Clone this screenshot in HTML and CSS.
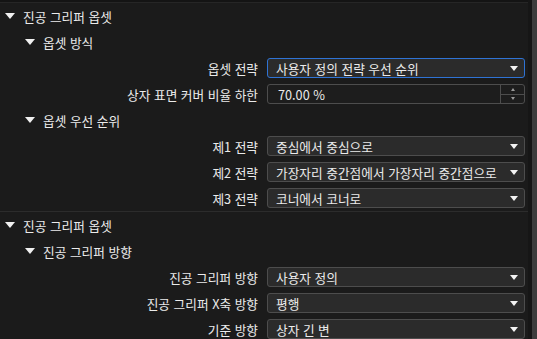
FILE: index.html
```html
<!DOCTYPE html>
<html lang="ko">

<head>
  <meta charset="UTF-8">
  <meta name="viewport" content="width=device-width, initial-scale=1.0">
  <title>진공 그리퍼 옵셋</title>
  <link rel="stylesheet" href="styles.css">
</head>

<body>
  <div class="window">
    <div class="panel">

      <!-- 첫 번째 그룹 -->
      <div class="group">
        <div class="head lvl1"><span class="tri"></span>진공 그리퍼 옵셋</div>
        <div class="head lvl2"><span class="tri"></span>옵셋 방식</div>
        <div class="row">
          <div class="label">옵셋 전략</div>
          <div class="combo focus"><span>사용자 정의 전략 우선 순위</span><span class="arrow"></span></div>
        </div>
        <div class="row">
          <div class="label">상자 표면 커버 비율 하한</div>
          <div class="spin">
            <span class="val">70.00 %</span>
            <span class="btns"><span class="up"></span><span class="down"></span></span>
          </div>
        </div>
        <div class="head lvl2"><span class="tri"></span>옵셋 우선 순위</div>
        <div class="row">
          <div class="label">제1 전략</div>
          <div class="combo"><span>중심에서 중심으로</span><span class="arrow"></span></div>
        </div>
        <div class="row">
          <div class="label">제2 전략</div>
          <div class="combo"><span>가장자리 중간점에서 가장자리 중간점으로</span><span class="arrow"></span></div>
        </div>
        <div class="row">
          <div class="label">제3 전략</div>
          <div class="combo"><span>코너에서 코너로</span><span class="arrow"></span></div>
        </div>
      </div>

      <!-- 두 번째 그룹 -->
      <div class="group">
        <div class="head lvl1"><span class="tri"></span>진공 그리퍼 옵셋</div>
        <div class="head lvl2"><span class="tri"></span>진공 그리퍼 방향</div>
        <div class="row">
          <div class="label">진공 그리퍼 방향</div>
          <div class="combo"><span>사용자 정의</span><span class="arrow"></span></div>
        </div>
        <div class="row">
          <div class="label">진공 그리퍼 X축 방향</div>
          <div class="combo"><span>평행</span><span class="arrow"></span></div>
        </div>
        <div class="row">
          <div class="label">기준 방향</div>
          <div class="combo"><span>상자 긴 변</span><span class="arrow"></span></div>
        </div>
      </div>

    </div>
    <div class="scrollbar"><div class="thumb"></div></div>
  </div>
</body>

</html>
```

FILE: styles.css
```css
body {
  margin: 0;
  background: #1b1b1b;
  font-family: "Noto Sans CJK KR", "Noto Sans", sans-serif;
  font-size: 12.7px;
  color: #ebebeb;
  overflow: hidden;
}

.window {
  display: flex;
  height: 339px;
}

.panel {
  width: 528px;
  border-top: 2px solid #141414;
}

.group {
  border-bottom: 1px solid #2c2c2c;
}

.group:first-child {
  border-top: 1px solid #262626;
}

.head {
  display: flex;
  align-items: center;
  height: 26px;
}

.lvl1 {
  padding-left: 5px;
}

.lvl2 {
  padding-left: 25px;
}

/* Expanded tree arrow */
.tri {
  width: 0;
  height: 0;
  border-left: 5.5px solid transparent;
  border-right: 5.5px solid transparent;
  border-top: 6px solid #f0f0f0;
  margin-right: 8px;
}

.row {
  display: flex;
  align-items: center;
  height: 26px;
}

.label {
  width: 267px;
  padding-right: 9px;
  box-sizing: border-box;
  text-align: right;
  white-space: nowrap;
}

.combo {
  display: flex;
  align-items: center;
  justify-content: space-between;
  width: 258px;
  height: 20px;
  box-sizing: border-box;
  padding: 0 6px 0 8px;
  background: #2b2b2b;
  border: 1px solid #4d4d4d;
  border-radius: 3px;
  white-space: nowrap;
}

.combo.focus {
  border-color: #2f73d4;
}

.arrow {
  width: 0;
  height: 0;
  border-left: 4.5px solid transparent;
  border-right: 4.5px solid transparent;
  border-top: 5px solid #f2f2f2;
}

.spin {
  display: flex;
  width: 258px;
  height: 20px;
  box-sizing: border-box;
  background: #1d1d1d;
  border: 1px solid #4d4d4d;
  border-radius: 3px;
}

.spin .val {
  flex: 1;
  display: flex;
  align-items: center;
  padding-left: 10px;
}

.spin .btns {
  display: flex;
  flex-direction: column;
  width: 23px;
  border-left: 1px solid #4d4d4d;
}

.spin .btns span {
  flex: 1;
  display: flex;
  align-items: center;
  justify-content: center;
}

.spin .btns .up {
  border-bottom: 1px solid #4d4d4d;
}

.spin .up::after {
  content: "";
  border-left: 2.5px solid transparent;
  border-right: 2.5px solid transparent;
  border-bottom: 3px solid #9a9a9a;
}

.spin .down::after {
  content: "";
  border-left: 2.5px solid transparent;
  border-right: 2.5px solid transparent;
  border-top: 3px solid #9a9a9a;
}

.scrollbar {
  width: 9px;
  background: #161616;
  display: flex;
  justify-content: flex-end;
}

.thumb {
  width: 5px;
  background: #3d3d3d;
}
```
